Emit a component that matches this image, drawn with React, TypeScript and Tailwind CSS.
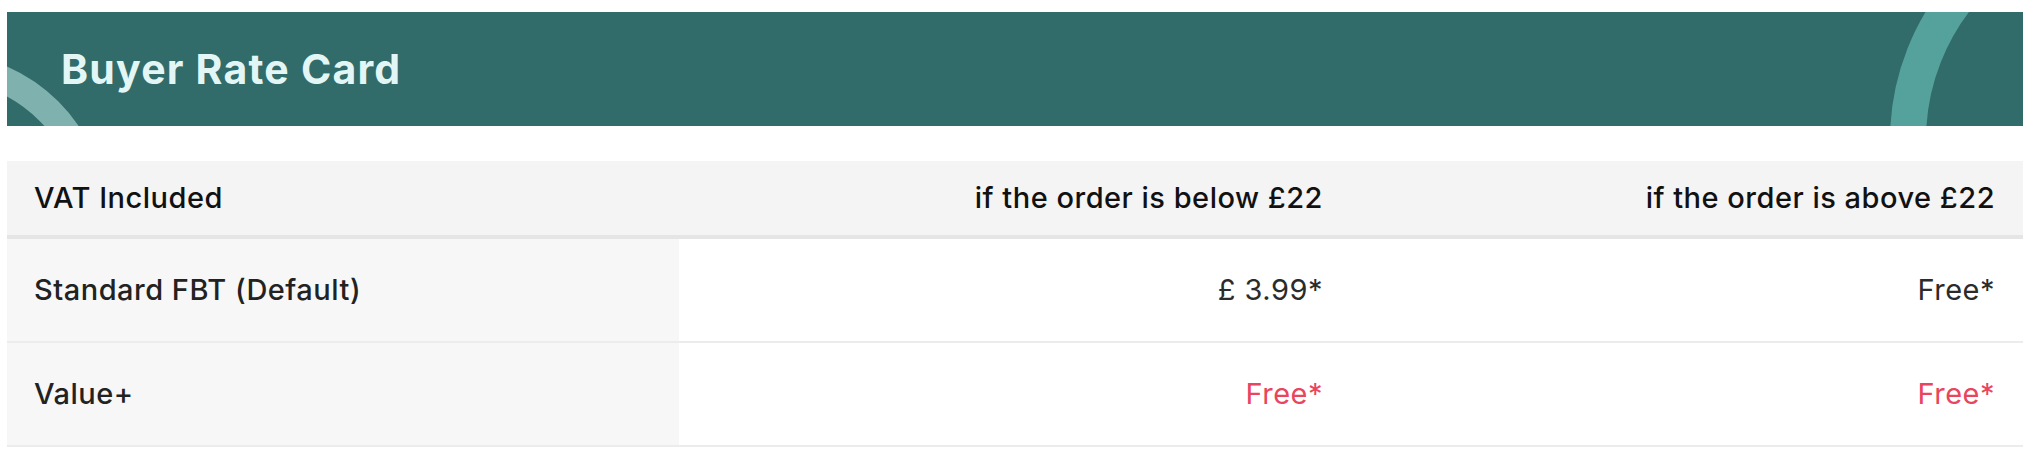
import React from "react";

const rows = [
  { label: "Standard FBT (Default)", below: "£ 3.99*", above: "Free*", red: false },
  { label: "Value+", below: "Free*", above: "Free*", red: true },
];

export default function App() {
  return (
    <div
      className="w-[2030px] h-[462px] bg-white pt-[12px] px-[7px] overflow-hidden"
      style={{ fontFamily: "Inter, 'Noto Sans', sans-serif" }}
    >
      <div className="relative h-[114px] bg-[#316b6a] overflow-hidden flex items-center pl-[54px]">
        <svg
          className="absolute left-0 top-0"
          width="2018"
          height="114"
          viewBox="0 0 2018 114"
        >
          <circle cx="-67" cy="208" r="154" fill="none" stroke="#7fb1ae" strokeWidth="27" />
          <circle cx="2131" cy="128" r="230" fill="none" stroke="#55a29c" strokeWidth="36" />
        </svg>
        <h1 className="relative text-[41px] font-bold text-[#e3f6f6] leading-none tracking-[1.2px]">
          Buyer Rate Card
        </h1>
      </div>

      <div className="mt-[35px] w-full text-[29px] tracking-[0.5px]">
        <div className="grid grid-cols-3 h-[78px] bg-[#f4f4f4] border-b-[4px] border-[#e5e5e5] font-medium text-[#111]">
          <div className="flex items-center pl-[27px]">VAT Included</div>
          <div className="flex items-center justify-end pr-[28px]">if the order is below £22</div>
          <div className="flex items-center justify-end pr-[28px]">if the order is above £22</div>
        </div>
        {rows.map((r) => (
          <div
            key={r.label}
            className="grid grid-cols-3 h-[104px] border-b-[2px] border-[#ececec]"
          >
            <div className="flex items-center pl-[27px] bg-[#f7f7f7] font-medium text-[#222]">
              {r.label}
            </div>
            <div
              className={
                r.red
                  ? "flex items-center justify-end pr-[28px] text-[#e9455e]"
                  : "flex items-center justify-end pr-[28px] text-[#2b2b2b]"
              }
            >
              {r.below}
            </div>
            <div
              className={
                r.red
                  ? "flex items-center justify-end pr-[28px] text-[#e9455e]"
                  : "flex items-center justify-end pr-[28px] text-[#2b2b2b]"
              }
            >
              {r.above}
            </div>
          </div>
        ))}
      </div>
    </div>
  );
}
